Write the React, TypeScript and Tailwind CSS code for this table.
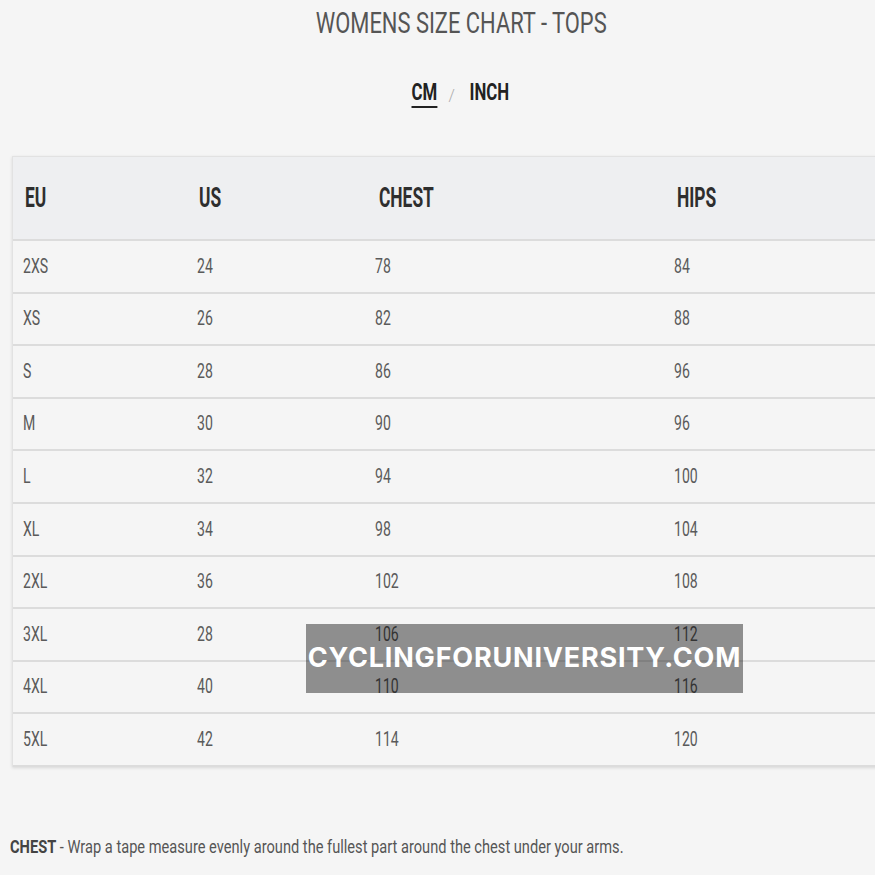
const rows = [
  ["2XS", "24", "78", "84"],
  ["XS", "26", "82", "88"],
  ["S", "28", "86", "96"],
  ["M", "30", "90", "96"],
  ["L", "32", "94", "100"],
  ["XL", "34", "98", "104"],
  ["2XL", "36", "102", "108"],
  ["3XL", "28", "106", "112"],
  ["4XL", "40", "110", "116"],
  ["5XL", "42", "114", "120"],
];

// condensed look: Roboto squeezed horizontally
const narrow = "inline-block whitespace-nowrap origin-left";

export default function App() {
  return (
    <div className="relative h-[875px] w-[875px] overflow-hidden bg-[#f5f5f5] font-['Roboto',sans-serif]">
      <h1 className="flex justify-center pl-[48px] pt-[4px] text-[30px] leading-[38px] text-[#555]">
        <span className="inline-block origin-center scale-x-[0.73] whitespace-nowrap">WOMENS SIZE CHART - TOPS</span>
      </h1>

      <div className="mt-[35px] flex items-center justify-center gap-[6px] pl-[48px] text-[24px] font-bold leading-[26px] text-[#222]">
        <span className="inline-block origin-center scale-x-[0.7] border-b-2 border-[#222] pb-[1px]">CM</span>
        <span className="mt-[6px] text-[16px] font-light text-[#aaa]">/</span>
        <span className="inline-block origin-center scale-x-[0.7] pb-[3px]">INCH</span>
      </div>

      <div className="ml-[12px] mt-[47px] w-[880px] border-l border-t border-[#e2e2e2] shadow-[0_1px_3px_rgba(0,0,0,0.12)]">
        <div className="grid h-[84px] grid-cols-[174px_178px_298px_1fr] items-center border-b-2 border-[#dcdcdc] bg-[#eeeff1] text-[28px] font-bold text-[#2e2e2e]">
          <div className="pl-[12px]"><span className={`${narrow} scale-x-[0.62]`}>EU</span></div>
          <div className="pl-[12px]"><span className={`${narrow} scale-x-[0.62]`}>US</span></div>
          <div className="pl-[14px]"><span className={`${narrow} scale-x-[0.62]`}>CHEST</span></div>
          <div className="pl-[14px]"><span className={`${narrow} scale-x-[0.62]`}>HIPS</span></div>
        </div>
        {rows.map((r) => (
          <div
            key={r[0]}
            className="grid h-[52.6px] grid-cols-[174px_178px_298px_1fr] items-center border-b-2 border-[#dcdcdc] bg-[#f5f5f5] text-[21px] text-[#5a5a5a]"
          >
            <div className="pl-[10px]"><span className={`${narrow} scale-x-[0.67]`}>{r[0]}</span></div>
            <div className="pl-[10px]"><span className={`${narrow} scale-x-[0.67]`}>{r[1]}</span></div>
            <div className="pl-[10px]"><span className={`${narrow} scale-x-[0.67]`}>{r[2]}</span></div>
            <div className="pl-[11px]"><span className={`${narrow} scale-x-[0.67]`}>{r[3]}</span></div>
          </div>
        ))}
      </div>

      <p className="mt-[66px] pl-[10px] text-[19px] text-[#555]">
        <span className={`${narrow} scale-x-[0.77]`}>
          <span className="font-bold text-[#444]">CHEST</span> - Wrap a tape measure evenly around the fullest part around the chest under your arms.
        </span>
      </p>

      <div className="absolute left-[306px] top-[624px] flex h-[69px] w-[437px] items-center justify-center bg-[rgba(0,0,0,0.42)]">
        <span className="font-['Inter',sans-serif] text-[27px] font-bold tracking-[0.8px] text-white">
          CYCLINGFORUNIVERSITY.COM
        </span>
      </div>
    </div>
  );
}
